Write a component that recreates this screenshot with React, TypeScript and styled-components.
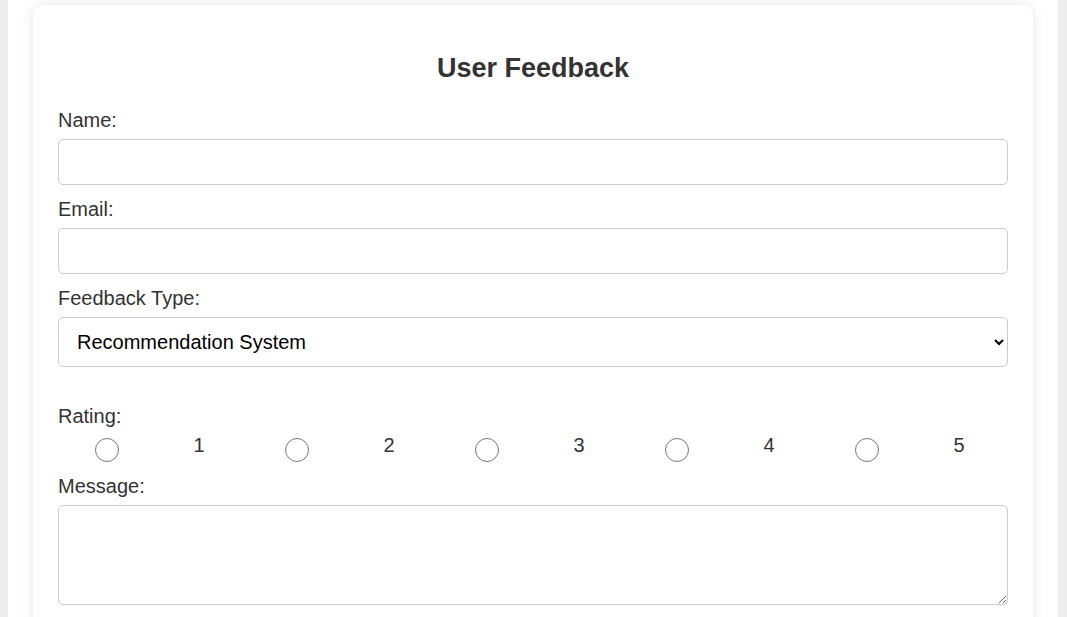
import React from "react";
import styled, { createGlobalStyle } from "styled-components";

const GlobalStyle = createGlobalStyle`
  html {
    background: #ededed;
    overflow: hidden;
  }
  body {
    margin: 0 9px 0 8px;
    background: #ffffff;
    font-family: "Liberation Sans", Arial, sans-serif;
    color: #333;
    min-height: 617px;
  }
`;

const Page = styled.div`
  padding-top: 5px;
`;

const Card = styled.form`
  max-width: 1000px;
  margin: 0 auto;
  box-sizing: border-box;
  padding: 25px;
  background: #fff;
  border-radius: 10px;
  box-shadow: 0 0 12px rgba(0, 0, 0, 0.1);
`;

const Title = styled.h2`
  margin: 23px 0 25px;
  text-align: center;
  font-size: 27px;
  font-weight: bold;
  color: #333;
`;

const Label = styled.label`
  display: block;
  font-size: 20px;
  line-height: 23px;
  margin-bottom: 7px;
  color: #333;
`;

const TextInput = styled.input`
  display: block;
  width: 100%;
  box-sizing: border-box;
  height: 46px;
  margin: 0 0 13px;
  padding: 10px 14px;
  font-size: 20px;
  font-family: inherit;
  border: 1px solid #ccc;
  border-radius: 5px;
  background: #fff;
`;

const Select = styled.select`
  display: block;
  width: 100%;
  box-sizing: border-box;
  height: 50px;
  margin: 0 0 38px;
  padding: 0 10px 0 14px;
  font-size: 20px;
  font-family: inherit;
  color: #000;
  border: 1px solid #ccc;
  border-radius: 5px;
  background: #fff;
`;

const RatingRow = styled.div`
  display: grid;
  grid-template-columns: repeat(5, 1fr);
  margin-top: -1px;
  margin-bottom: 13px;
`;

const RatingOption = styled.label`
  display: grid;
  grid-template-columns: 1fr 1fr;
  align-items: start;
  justify-items: center;
  font-size: 20px;
  line-height: 23px;
  color: #333;
  cursor: pointer;
`;

const Radio = styled.input`
  width: 24px;
  height: 24px;
  margin: 4px 0 0 3px;
`;

const Number = styled.span`
  margin-right: 3px;
`;

const TextArea = styled.textarea`
  display: block;
  width: 100%;
  box-sizing: border-box;
  height: 100px;
  margin: 0;
  padding: 10px 14px;
  font-size: 20px;
  font-family: inherit;
  border: 1px solid #ccc;
  border-radius: 5px;
  resize: vertical;
`;

export default function App() {
  return (
    <>
      <GlobalStyle />
      <Page>
        <Card onSubmit={e => e.preventDefault()}>
          <Title>User Feedback</Title>

          <Label htmlFor="name">Name:</Label>
          <TextInput id="name" type="text" />

          <Label htmlFor="email">Email:</Label>
          <TextInput id="email" type="email" />

          <Label htmlFor="type">Feedback Type:</Label>
          <Select id="type" defaultValue="recommendation">
            <option value="recommendation">Recommendation System</option>
            <option value="search">Search</option>
            <option value="ui">User Interface</option>
            <option value="other">Other</option>
          </Select>

          <Label>Rating:</Label>
          <RatingRow>
            {[1, 2, 3, 4, 5].map(n => (
              <RatingOption key={n}>
                <Radio type="radio" name="rating" value={n} />
                <Number>{n}</Number>
              </RatingOption>
            ))}
          </RatingRow>

          <Label htmlFor="message">Message:</Label>
          <TextArea id="message" />
        </Card>
      </Page>
    </>
  );
}
